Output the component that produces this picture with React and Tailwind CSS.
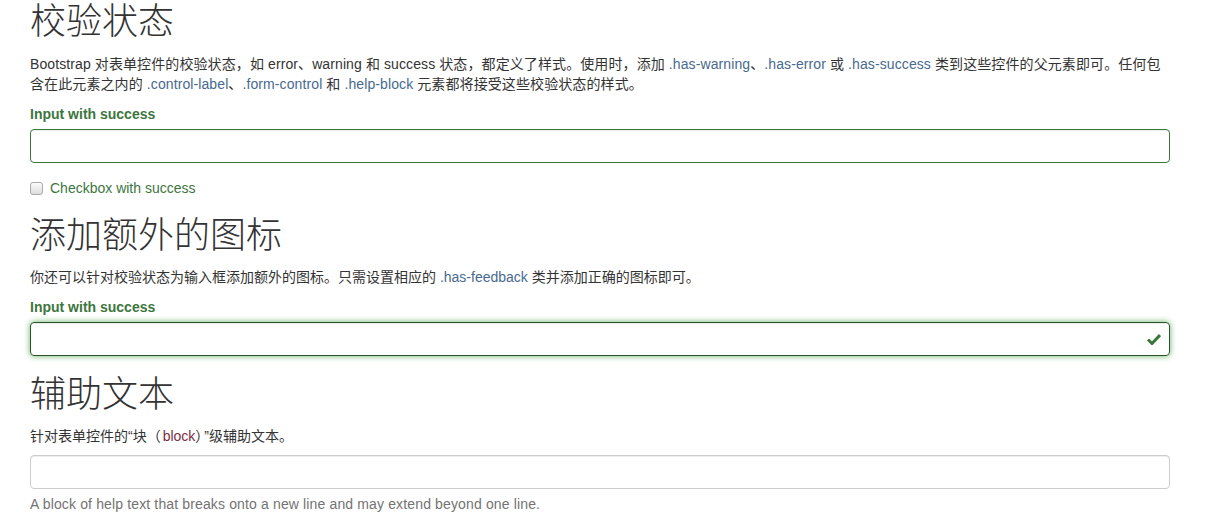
import React from "react";

const sans = { fontFamily: '"Liberation Sans", "Noto Sans CJK SC", sans-serif' };
const heading = { fontFamily: '"Liberation Serif", "Noto Sans CJK SC", serif' };

const Code = ({ children }) => <span className="text-[#476a8f]">{children}</span>;

const Check = () => (
  <svg width="14" height="12" viewBox="0 0 14 12" className="block">
    <path d="M1 6.5 L5 10.5 L13 2" fill="none" stroke="#3c763d" strokeWidth="3" strokeLinecap="butt" />
  </svg>
);

const App = () => {
  return (
    <div className="bg-white w-[1210px] h-[526px] overflow-hidden text-[14px] leading-[20px] text-[#333]" style={sans}>
      <div className="ml-[30px] w-[1140px] pt-[2px]">
        {/* 校验状态 */}
        <h2 className="text-[36px] leading-[40px] font-light text-[#333]" style={heading}>
          校验状态
        </h2>
        <p className="mt-[12px] tracking-[0.1px]">
          Bootstrap 对表单控件的校验状态，如 error、warning 和 success 状态，都定义了样式。使用时，添加 <Code>.has-warning</Code>、<Code>.has-error</Code> 或 <Code>.has-success</Code> 类到这些控件的父元素即可。任何包含在此元素之内的 <Code>.control-label</Code>、<Code>.form-control</Code> 和 <Code>.help-block</Code> 元素都将接受这些校验状态的样式。
        </p>
        <label className="block mt-[10px] font-bold text-[#3c763d]">Input with success</label>
        <input
          type="text"
          className="block mt-[5px] w-full h-[34px] rounded-[4px] border border-[#3c763d] px-3 outline-none shadow-[inset_0_1px_1px_rgba(0,0,0,0.075)]"
        />
        <div className="mt-[15px] flex items-center h-[20px] text-[#3c763d]">
          <span className="w-[13px] h-[13px] rounded-[3px] border border-[#a9a9a9] bg-gradient-to-b from-[#fcfcfc] to-[#dcdcdc]" />
          <span className="ml-[7px]">Checkbox with success</span>
        </div>

        {/* 添加额外的图标 */}
        <h2 className="mt-[18px] text-[36px] leading-[40px] font-light text-[#333]" style={heading}>
          添加额外的图标
        </h2>
        <p className="mt-[11px]">
          你还可以针对校验状态为输入框添加额外的图标。只需设置相应的 <Code>.has-feedback</Code> 类并添加正确的图标即可。
        </p>
        <label className="block mt-[10px] font-bold text-[#3c763d]">Input with success</label>
        <div className="relative mt-[5px]">
          <input
            type="text"
            className="block w-full h-[34px] rounded-[4px] border border-[#2b542c] px-3 outline-none shadow-[inset_0_1px_1px_rgba(0,0,0,0.075),0_0_6px_#67b168]"
          />
          <span className="absolute right-[9px] top-[11px]">
            <Check />
          </span>
        </div>

        {/* 辅助文本 */}
        <h2 className="mt-[19px] text-[36px] leading-[40px] font-light text-[#333]" style={heading}>
          辅助文本
        </h2>
        <p className="mt-[11px]">
          针对表单控件的“块<span className="tracking-[2px]">（</span><span className="text-[#7a2e3e]">block</span><span className="tracking-[2px]">）</span>”级辅助文本。
        </p>
        <input
          type="text"
          className="block mt-[9px] w-full h-[34px] rounded-[4px] border border-[#ccc] px-3 outline-none shadow-[inset_0_1px_1px_rgba(0,0,0,0.075)]"
        />
        <p className="mt-[5px] text-[#737373] tracking-[0.14px]">
          A block of help text that breaks onto a new line and may extend beyond one line.
        </p>
      </div>
    </div>
  );
};

export default App;
